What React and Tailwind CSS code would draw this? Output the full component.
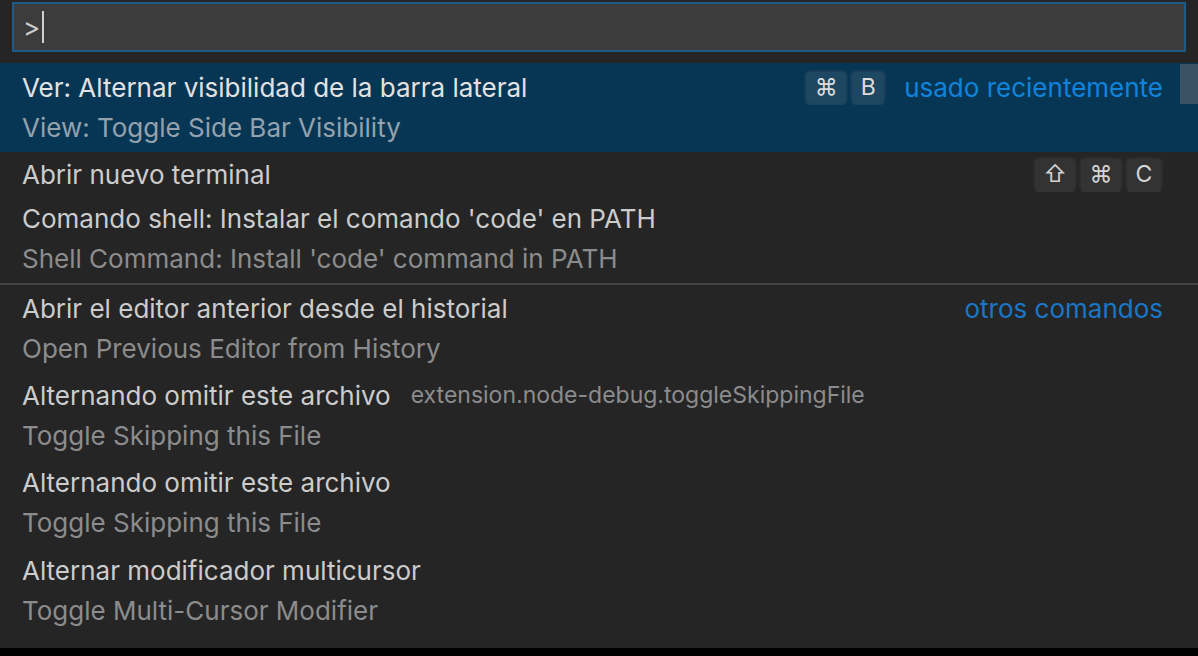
import React from "react";

const font = { fontFamily: "Inter, 'Noto Sans', sans-serif" };

function Key({ children, selected, w }) {
  return (
    <span
      className={
        "inline-flex h-[35px] items-center justify-center rounded-[6px] border-2 text-[23px] leading-none " +
        w +
        " " +
        (selected
          ? "border-[#173c55] border-b-[#1b4460] bg-[#1e4862] text-[#dcdcdc]"
          : "border-[#2c2c2c] border-b-[#343434] bg-[#333333] text-[#d4d4d4]")
      }
    >
      {children}
    </span>
  );
}

function Line({ children, className = "" }) {
  return <div className={"flex h-[40px] items-center " + className}>{children}</div>;
}

export default function App() {
  return (
    <div className="flex h-[656px] w-[1198px] flex-col overflow-hidden bg-black" style={font}>
      <div className="relative h-[648px] bg-[#252526]">
        {/* input */}
        <div className="px-[12px] pt-[2px]">
          <div className="flex h-[50px] items-center border-2 border-[#1d5a86] bg-[#3c3c3c] pl-[9px]">
            <span className="text-[26px] text-[#cccccc]">&gt;</span>
            <span className="ml-[2px] h-[32px] w-[2px] bg-[#d0d0d0]" />
          </div>
        </div>
        <div className="mt-[11px]">
          {/* row 1 selected */}
          <div className="relative h-[89px] bg-[#073655] pl-[22px] pr-[35px] pt-[4px]">
            <Line className="justify-between">
              <span className="text-[26px] text-[#e2e2e2]">Ver: Alternar visibilidad de la barra lateral</span>
              <div className="flex items-center">
                <div className="flex gap-[2px]">
                  <Key selected w="w-[44px]">⌘</Key>
                  <Key selected w="w-[36px]">B</Key>
                </div>
                <span className="ml-[18px] text-[26px] text-[#1084dc]">usado recientemente</span>
              </div>
            </Line>
            <Line>
              <span className="text-[26px] text-[#93a2ad]">View: Toggle Side Bar Visibility</span>
            </Line>
            <div className="absolute right-0 top-[1px] h-[40px] w-[18px] bg-[#3b5264]" />
          </div>
          {/* row 2 */}
          <div className="h-[44px] pl-[22px] pr-[35px] pt-[2px]">
            <Line className="justify-between">
              <span className="text-[26px] text-[#cccccc]">Abrir nuevo terminal</span>
              <div className="flex gap-[2px]">
                <Key w="w-[44px]">⇧</Key>
                <Key w="w-[44px]">⌘</Key>
                <Key w="w-[38px]">C</Key>
              </div>
            </Line>
          </div>
          {/* row 3 */}
          <div className="h-[87px] pl-[22px] pr-[35px] pt-[2px]">
            <Line>
              <span className="text-[26px] text-[#cccccc]">Comando shell: Instalar el comando 'code' en PATH</span>
            </Line>
            <Line>
              <span className="text-[26px] text-[#8c8c8c]">Shell Command: Install 'code' command in PATH</span>
            </Line>
          </div>
          {/* row 4 */}
          <div className="h-[89px] border-t-2 border-[#434343] pl-[22px] pr-[35px] pt-[3px]">
            <Line className="justify-between">
              <span className="text-[26px] text-[#cccccc]">Abrir el editor anterior desde el historial</span>
              <span className="text-[26px] text-[#1a76c6]">otros comandos</span>
            </Line>
            <Line>
              <span className="text-[26px] text-[#8c8c8c]">Open Previous Editor from History</span>
            </Line>
          </div>
          {/* row 5 */}
          <div className="h-[87px] pl-[22px] pr-[35px] pt-[3px]">
            <Line>
              <span className="text-[26px] text-[#cccccc]">Alternando omitir este archivo</span>
              <span className="ml-[20px] text-[23px] text-[#8c8c8c]">extension.node-debug.toggleSkippingFile</span>
            </Line>
            <Line>
              <span className="text-[26px] text-[#8c8c8c]">Toggle Skipping this File</span>
            </Line>
          </div>
          {/* row 6 */}
          <div className="h-[87px] pl-[22px] pr-[35px] pt-[3px]">
            <Line>
              <span className="text-[26px] text-[#cccccc]">Alternando omitir este archivo</span>
            </Line>
            <Line>
              <span className="text-[26px] text-[#8c8c8c]">Toggle Skipping this File</span>
            </Line>
          </div>
          {/* row 7 */}
          <div className="h-[87px] pl-[22px] pr-[35px] pt-[4px]">
            <Line>
              <span className="text-[26px] text-[#cccccc]">Alternar modificador multicursor</span>
            </Line>
            <Line>
              <span className="text-[26px] text-[#8c8c8c]">Toggle Multi-Cursor Modifier</span>
            </Line>
          </div>
        </div>
      </div>
    </div>
  );
}
